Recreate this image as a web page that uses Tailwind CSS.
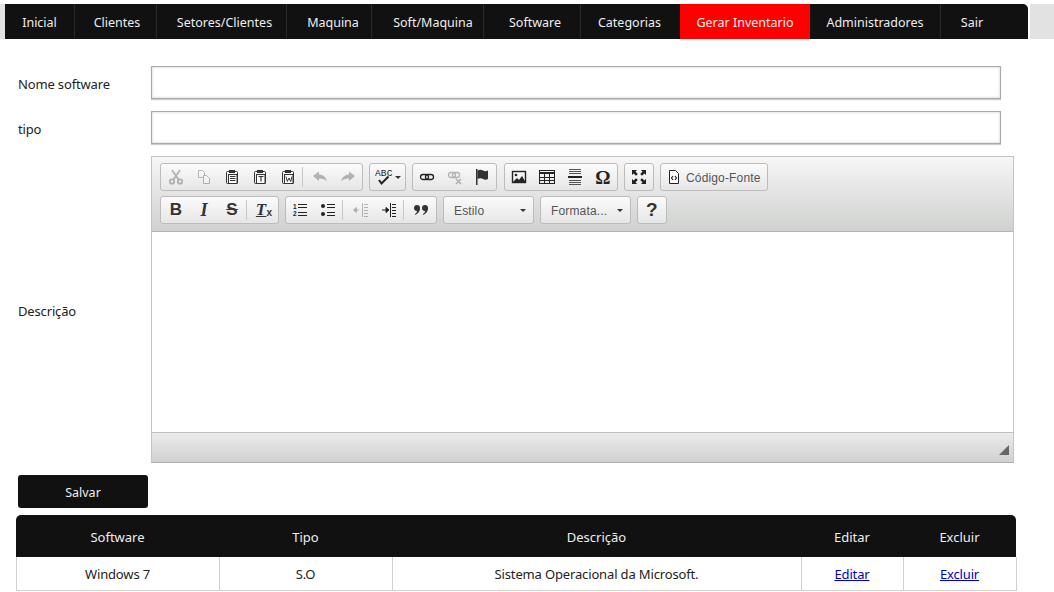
<!DOCTYPE html>
<html lang="pt">
<head>
<meta charset="UTF-8">
<title>Gerar Inventario</title>
<script src="https://cdn.jsdelivr.net/npm/@tailwindcss/browser@4"></script>
</head>
<body class="bg-white text-[#222] text-[13px] tracking-[-0.15px] font-['Noto_Sans',sans-serif] overflow-hidden">
<div class="h-[592px] overflow-hidden pt-[4px]">

  <!-- menu -->
  <div class="flex h-[35px]">
    <div class="w-[5px] bg-[#e2e2e2]"></div>
    <nav class="flex w-[1023px] bg-[#111] rounded-tr-[5px] text-[#eee] text-[12.5px] tracking-normal leading-[37px] text-center">
      <a class="w-[70px] border-r border-[#2a2a2a]">Inicial</a>
      <a class="w-[82px] pl-[3px] border-r border-[#2a2a2a]">Clientes</a>
      <a class="w-[130px] pl-[6px] border-r border-[#2a2a2a]">Setores/Clientes</a>
      <a class="w-[85px] pl-[8px] border-r border-[#2a2a2a]">Maquina</a>
      <a class="w-[112px] pl-[11px] border-r border-[#2a2a2a]">Soft/Maquina</a>
      <a class="w-[97px] pl-[6px] border-r border-[#2a2a2a]">Software</a>
      <a class="w-[99px] pr-[2px]">Categorias</a>
      <a class="w-[130px] bg-[#ff0000]">Gerar Inventario</a>
      <a class="w-[131px] border-r border-[#2a2a2a]">Administradores</a>
      <a class="w-[60px] pl-[2px]">Sair</a>
    </nav>
    <div class="w-[2px]"></div>
    <div class="w-[24px] bg-[#e2e2e2]"></div>
  </div>

  <form class="pl-[18px] pt-[27px]">
    <div class="flex items-center h-[33px]">
      <label class="w-[133px] pt-[4px]">Nome software</label>
      <input type="text" class="w-[850px] h-[33px] bg-white border border-[#a9a9a9] shadow-[inset_0_0_3px_#ccc,0_1px_1px_#ccc]">
    </div>
    <div class="flex items-center h-[33px] mt-[12px]">
      <label class="w-[133px] pt-[4px]">tipo</label>
      <input type="text" class="w-[850px] h-[33px] bg-white border border-[#a9a9a9] shadow-[inset_0_0_3px_#ccc,0_1px_1px_#ccc]">
    </div>

    <div class="flex items-center mt-[12px]">
      <label class="w-[133px] pt-[4px]">Descrição</label>

      <!-- editor -->
      <div class="w-[863px] h-[307px] flex flex-col border border-[#c4c4c4] border-b-[#b0b0b0] font-['Liberation_Sans',sans-serif] text-[12px] tracking-[0.15px] text-[#555]">
        <div class="h-[75px] bg-gradient-to-b from-[#f6f6f6] to-[#cfd1cf] border-b border-[#b6b6b6] pl-[8px] pt-[6px]">

          <div class="flex gap-[6px] h-[28px]">
            <div class="flex rounded-[3px] border border-[#bcbcbc] bg-gradient-to-b from-[#fbfbfb] to-[#e6e6e6] pl-[1px]">
              <span class="w-[28px] flex items-center justify-center opacity-30"><svg width="16" height="16" viewBox="0 0 16 16" fill="none" stroke="#222" stroke-width="1.800"><path d="M4 1l6.500 9.500M12 1L5.500 10.500"/><circle cx="4" cy="12.500" r="2.200"/><circle cx="12" cy="12.500" r="2.200"/></svg></span>
              <span class="w-[28px] flex items-center justify-center opacity-30"><svg width="16" height="16" viewBox="0 0 16 16" fill="#fff" stroke="#222"><path d="M2.500 1.500h4l2 2v5h-6z"/><path d="M7.500 6.500h3l3 3v5h-6z"/></svg></span>
              <span class="w-[28px] flex items-center justify-center"><svg width="16" height="16" viewBox="0 0 16 16" fill="none" stroke="#333"><path d="M5 2.500H3.500q-1 0-1 1v10q0 1 1 1h9q1 0 1-1v-10q0-1-1-1H11"/><rect x="5.500" y="1.500" width="5" height="2" fill="#333"/><rect x="4.500" y="5.500" width="8.500" height="9" fill="#fff"/><path d="M6 7.500h5.500M6 9.500h5.500M6 11.500h5.500"/></svg></span>
              <span class="w-[28px] flex items-center justify-center"><svg width="16" height="16" viewBox="0 0 16 16" fill="none" stroke="#333"><path d="M5 2.500H3.500q-1 0-1 1v10q0 1 1 1h9q1 0 1-1v-10q0-1-1-1H11"/><rect x="5.500" y="1.500" width="5" height="2" fill="#333"/><rect x="4.500" y="5.500" width="8.500" height="9" fill="#fff"/><path d="M6.500 7.500h5M9 7.500v5" stroke-width="1.200"/></svg></span>
              <span class="w-[28px] flex items-center justify-center"><svg width="16" height="16" viewBox="0 0 16 16" fill="none" stroke="#333"><path d="M5 2.500H3.500q-1 0-1 1v10q0 1 1 1h9q1 0 1-1v-10q0-1-1-1H11"/><rect x="5.500" y="1.500" width="5" height="2" fill="#333"/><rect x="4.500" y="5.500" width="8.500" height="9" fill="#fff"/><path d="M6 7.500l1.300 5 1.700-3.500 1.700 3.500 1.300-5" stroke-width="1"/></svg></span>
              <span class="w-[4px] flex items-center"><i class="block w-px h-[20px] bg-[#c8c8c8]"></i></span>
              <span class="w-[28px] flex items-center justify-center opacity-30"><svg width="16" height="16" viewBox="0 0 16 16" fill="#222"><path d="M1 7l6-4.500v3q6 0 8 6.500-3-3-8-2.500v2.500z"/></svg></span>
              <span class="w-[28px] flex items-center justify-center opacity-30"><svg width="16" height="16" viewBox="0 0 16 16" fill="#222"><path d="M15 7L9 2.500v3q-6 0-8 6.500 3-3 8-2.500v2.500z"/></svg></span>
            </div>
            <div class="flex items-center justify-center w-[37px] rounded-[3px] border border-[#bcbcbc] bg-gradient-to-b from-[#fbfbfb] to-[#e6e6e6]">
              <svg width="20" height="18" viewBox="0 0 20 18" fill="none"><text x="0" y="8" font-size="9.500" fill="#222" font-family="Liberation Mono">ABC</text><path d="M4 12l2.500 3.500 7-7" stroke="#222" stroke-width="2"/></svg>
              <i class="w-0 h-0 border-x-[3px] border-x-transparent border-t-[3px] border-t-[#333]"></i>
            </div>
            <div class="flex w-[85px] mr-[1px] rounded-[3px] border border-[#bcbcbc] bg-gradient-to-b from-[#fbfbfb] to-[#e6e6e6]">
              <span class="w-[28px] flex items-center justify-center"><svg width="16" height="16" viewBox="0 0 16 16" fill="none" stroke="#222" stroke-width="1.300"><rect x="1.500" y="5.500" width="8" height="5" rx="2.500"/><rect x="6.500" y="5.500" width="8" height="5" rx="2.500"/></svg></span>
              <span class="w-[28px] flex items-center justify-center opacity-30"><svg width="16" height="16" viewBox="0 0 16 16" fill="none" stroke="#222" stroke-width="1.300"><rect x="1.500" y="3.500" width="7" height="5" rx="2.500"/><rect x="5.500" y="3.500" width="7" height="5" rx="2.500"/><path d="M9 10l5 5M14 10l-5 5" stroke-width="1.500"/></svg></span>
              <span class="w-[28px] flex items-center justify-center"><svg width="16" height="16" viewBox="0 0 16 16" fill="#333"><path d="M2 0h1.500v16H2z"/><path d="M3.500 1.500q3-1.500 5.500 0t5 0V10q-2.500 1.500-5 0t-5.500 0z"/></svg></span>
            </div>
            <div class="flex w-[114px] rounded-[3px] border border-[#bcbcbc] bg-gradient-to-b from-[#fbfbfb] to-[#e6e6e6]">
              <span class="w-[28px] flex items-center justify-center"><svg width="16" height="16" viewBox="0 0 16 16" fill="none" stroke="#222"><rect x="1.500" y="2.500" width="13" height="11" stroke-width="1.400"/><circle cx="5" cy="6" r="1.300" fill="#222" stroke="none"/><path d="M2 13l4-4 2 2 3-4 3.500 6z" fill="#222" stroke="none"/></svg></span>
              <span class="w-[28px] flex items-center justify-center"><svg width="16" height="16" viewBox="0 0 16 16" fill="none" stroke="#222"><rect x="0.500" y="1.500" width="15" height="13"/><path d="M0 3h16v2H0z" fill="#222" stroke="none"/><path d="M5.500 5v9M10.500 5v9M1 8.500h14M1 11.500h14"/></svg></span>
              <span class="w-[28px] flex items-center justify-center"><svg width="16" height="16" viewBox="0 0 16 16" fill="none" stroke="#555"><path d="M2 .500h12M2 2.500h12M2 4.500h12M2 11.500h12M2 13.500h12M2 15.500h12"/><path d="M1 8h14" stroke="#222" stroke-width="2"/></svg></span>
              <span class="w-[28px] flex items-center justify-center font-['Liberation_Serif',serif] font-bold text-[19px] leading-none text-[#222]">Ω</span>
            </div>
            <div class="flex items-center justify-center w-[30px] rounded-[3px] border border-[#bcbcbc] bg-gradient-to-b from-[#fbfbfb] to-[#e6e6e6]">
              <svg width="16" height="16" viewBox="0 0 16 16" fill="#222"><path d="M1 1h5L4.500 2.700l2.300 2.300-1.800 1.800-2.300-2.300L1 6zM15 1v5l-1.700-1.500L11 6.800 9.200 5l2.300-2.300L10 1zM1 15v-5l1.700 1.500L5 9.200 6.800 11l-2.300 2.300L6 15zM15 15h-5l1.500-1.700L9.200 11l1.800-1.800 2.300 2.300L15 10z"/></svg>
            </div>
            <div class="flex items-center w-[108px] pl-[6px] gap-[5px] rounded-[3px] border border-[#bcbcbc] bg-gradient-to-b from-[#fbfbfb] to-[#e6e6e6]">
              <svg width="14" height="16" viewBox="0 0 14 16" fill="#fff" stroke="#222"><path d="M2.500 1.500h6l3 3v10h-9z"/><path d="M6 7L4.500 9 6 11M8 7l1.500 2L8 11" fill="none" stroke-width="1.200"/></svg>
              <span class="pt-[2px]">Código-Fonte</span>
            </div>
          </div>

          <div class="flex gap-[6px] h-[28px] mt-[5px]">
            <div class="flex rounded-[3px] border border-[#bcbcbc] bg-gradient-to-b from-[#fbfbfb] to-[#e6e6e6] pl-[1px] text-[#333]">
              <span class="w-[28px] flex items-center justify-center font-bold text-[17px]">B</span>
              <span class="w-[28px] flex items-center justify-center font-['Liberation_Serif',serif] font-bold italic text-[18px]">I</span>
              <span class="w-[28px] flex items-center justify-center font-bold text-[17px] line-through">S</span>
              <span class="w-[4px] flex items-center"><i class="block w-px h-[20px] bg-[#c8c8c8]"></i></span>
              <span class="w-[28px] flex items-center justify-center font-['Liberation_Serif',serif] font-bold italic text-[17px]"><u>T</u><sub class="not-italic font-['Liberation_Sans',sans-serif] text-[10px]">x</sub></span>
            </div>
            <div class="flex w-[152px] rounded-[3px] border border-[#bcbcbc] bg-gradient-to-b from-[#fbfbfb] to-[#e6e6e6]">
              <span class="w-[28px] flex items-center justify-center"><svg width="16" height="16" viewBox="0 0 16 16" fill="none"><text x="1" y="7" font-size="6.500" font-weight="bold" fill="#222" font-family="Liberation Sans">1</text><text x="1" y="14" font-size="6.500" font-weight="bold" fill="#222" font-family="Liberation Sans">2</text><path d="M6 2.500h9M6 5.500h9M6 10.500h9M6 13.500h9" stroke="#222"/></svg></span>
              <span class="w-[28px] flex items-center justify-center"><svg width="16" height="16" viewBox="0 0 16 16" fill="none"><circle cx="3" cy="4" r="2" fill="#222"/><circle cx="3" cy="12" r="2" fill="#222"/><path d="M7 2.500h8M7 5.500h8M7 10.500h8M7 13.500h8" stroke="#222"/></svg></span>
              <span class="w-[5px] flex items-center"><i class="block w-px h-[20px] bg-[#c8c8c8]"></i></span>
              <span class="w-[28px] flex items-center justify-center opacity-30"><svg width="16" height="16" viewBox="0 0 16 16" fill="none" stroke="#222"><path d="M9.500 1v14M11 2.500h4M11 5.500h4M11 8.500h4M11 11.500h4M11 14.500h4M1 8h5"/><path d="M0.500 8l3-2.500v5z" fill="#222"/></svg></span>
              <span class="w-[28px] flex items-center justify-center"><svg width="16" height="16" viewBox="0 0 16 16" fill="none" stroke="#222"><path d="M9.500 1v14M11 2.500h4M11 5.500h4M11 8.500h4M11 11.500h4M11 14.500h4M1 8h5"/><path d="M8 8L5 5.500v5z" fill="#222"/></svg></span>
              <span class="w-[4px] flex items-center"><i class="block w-px h-[20px] bg-[#c8c8c8]"></i></span>
              <span class="w-[28px] flex items-center justify-center"><svg width="16" height="16" viewBox="0 0 16 16" fill="#333"><circle cx="4" cy="6" r="3"/><circle cx="12" cy="6" r="3"/><path d="M7 6q0 5-5 7V12q2-1 2-3zM15 6q0 5-5 7V12q2-1 2-3z"/></svg></span>
            </div>
            <div class="flex items-center justify-between w-[91px] pl-[10px] pr-[7px] rounded-[3px] border border-[#bcbcbc] bg-gradient-to-b from-[#fbfbfb] to-[#e6e6e6]">
              <span class="pt-[2px]">Estilo</span><i class="w-0 h-0 border-x-[3px] border-x-transparent border-t-[3px] border-t-[#333]"></i>
            </div>
            <div class="flex items-center justify-between w-[91px] pl-[10px] pr-[7px] rounded-[3px] border border-[#bcbcbc] bg-gradient-to-b from-[#fbfbfb] to-[#e6e6e6]">
              <span class="pt-[2px]">Formata...</span><i class="w-0 h-0 border-x-[3px] border-x-transparent border-t-[3px] border-t-[#333]"></i>
            </div>
            <div class="flex items-center justify-center w-[30px] rounded-[3px] border border-[#bcbcbc] bg-gradient-to-b from-[#fbfbfb] to-[#e6e6e6] font-bold text-[19px] text-[#333]">?</div>
          </div>
        </div>

        <div class="h-[200px] bg-white"></div>

        <div class="relative flex-1 border-t border-[#bfbfbf] bg-gradient-to-b from-[#ebebeb] to-[#cfd1cf]">
          <i class="absolute right-[4px] bottom-[7px] w-0 h-0 border-l-[10px] border-l-transparent border-b-[10px] border-b-[#666]"></i>
        </div>
      </div>
    </div>

    <button type="button" class="block w-[130px] h-[33px] mt-[12px] pt-[4px] rounded-[3px] bg-[#111] text-[#eee] text-[12.5px] tracking-normal">Salvar</button>
  </form>

  <!-- lista -->
  <table class="ml-[15.5px] mt-[7px] w-[1000px] table-fixed border-collapse text-center">
    <colgroup><col class="w-[203px]"><col class="w-[173px]"><col class="w-[409px]"><col class="w-[102px]"><col class="w-[113px]"></colgroup>
    <thead>
      <tr class="h-[42px] bg-[#111] text-[#eee] tracking-normal">
        <th class="font-normal pt-[3px] rounded-tl-[5px]">Software</th>
        <th class="font-normal pt-[3px]">Tipo</th>
        <th class="font-normal pt-[3px]">Descrição</th>
        <th class="font-normal pt-[3px]">Editar</th>
        <th class="font-normal pt-[3px] rounded-tr-[5px]">Excluir</th>
      </tr>
    </thead>
    <tbody>
      <tr class="h-[33px]">
        <td class="border border-[#d0d0d0] border-t-0 pt-[2px]">Windows 7</td>
        <td class="border border-[#d0d0d0] border-t-0 pt-[2px]">S.O</td>
        <td class="border border-[#d0d0d0] border-t-0 pt-[2px]">Sistema Operacional da Microsoft.</td>
        <td class="border border-[#d0d0d0] border-t-0 pt-[2px]"><a href="#" class="text-[#0000cc] underline">Editar</a></td>
        <td class="border border-[#d0d0d0] border-t-0 pt-[2px]"><a href="#" class="text-[#0000cc] underline">Excluir</a></td>
      </tr>
    </tbody>
  </table>
</div>
</body>
</html>
